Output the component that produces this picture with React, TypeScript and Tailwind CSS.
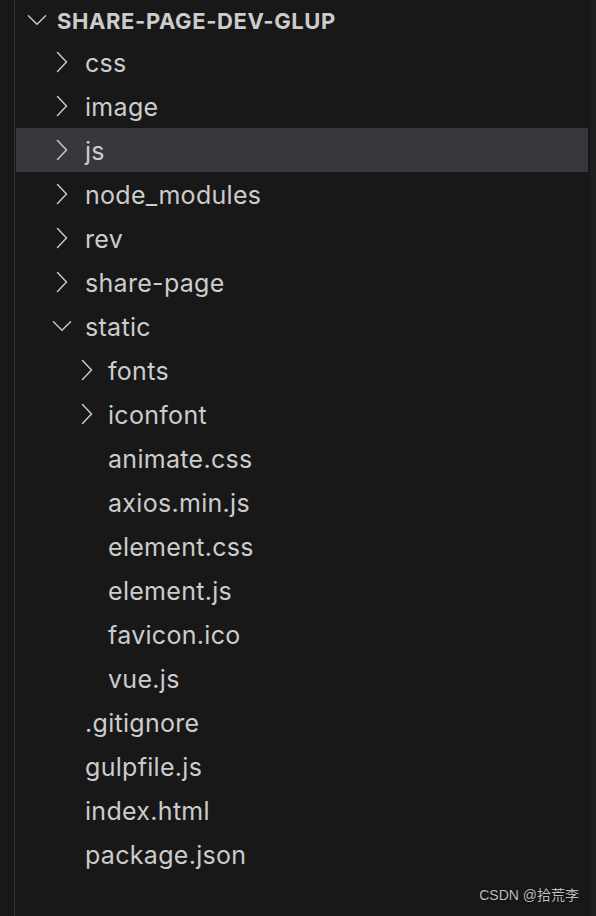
import React from "react";

interface TreeRow {
  name: string;
  depth: 1 | 2;
  kind: "closed" | "open" | "file";
  active?: boolean;
}

const rows: TreeRow[] = [
  { name: "css", depth: 1, kind: "closed" },
  { name: "image", depth: 1, kind: "closed" },
  { name: "js", depth: 1, kind: "closed", active: true },
  { name: "node_modules", depth: 1, kind: "closed" },
  { name: "rev", depth: 1, kind: "closed" },
  { name: "share-page", depth: 1, kind: "closed" },
  { name: "static", depth: 1, kind: "open" },
  { name: "fonts", depth: 2, kind: "closed" },
  { name: "iconfont", depth: 2, kind: "closed" },
  { name: "animate.css", depth: 2, kind: "file" },
  { name: "axios.min.js", depth: 2, kind: "file" },
  { name: "element.css", depth: 2, kind: "file" },
  { name: "element.js", depth: 2, kind: "file" },
  { name: "favicon.ico", depth: 2, kind: "file" },
  { name: "vue.js", depth: 2, kind: "file" },
  { name: ".gitignore", depth: 1, kind: "file" },
  { name: "gulpfile.js", depth: 1, kind: "file" },
  { name: "index.html", depth: 1, kind: "file" },
  { name: "package.json", depth: 1, kind: "file" },
];

function ChevronRight() {
  return (
    <svg width="12" height="22" viewBox="0 0 12 22" fill="none">
      <polyline points="1.5,1.5 10.5,11 1.5,20.5" stroke="#c8c8c8" strokeWidth="1.5" strokeLinecap="round" strokeLinejoin="round" />
    </svg>
  );
}

function ChevronDown() {
  return (
    <svg width="21" height="12" viewBox="0 0 21 12" fill="none">
      <polyline points="1.5,1.5 10.5,10.5 19.5,1.5" stroke="#c8c8c8" strokeWidth="1.5" strokeLinecap="round" strokeLinejoin="round" />
    </svg>
  );
}

export default function App(): JSX.Element {
  return (
    <div
      className="w-[596px] h-[916px] bg-[#181818] flex relative overflow-hidden text-[#cccccc]"
      style={{ fontFamily: "Inter, 'Noto Sans', sans-serif" }}
    >
      {/* left gutter + guide line */}
      <div className="w-[14px] shrink-0" />
      <div className="w-px shrink-0 bg-[#333333]" />
      <div className="w-px shrink-0" />

      {/* tree */}
      <div className="flex-1 flex flex-col">
        <div className="h-[40px] flex items-center pl-[11px]">
          <span className="w-[20px] flex justify-center">
            <ChevronDown />
          </span>
          <span className="ml-[10px] pt-px text-[22px] leading-none font-bold tracking-[0.6px] text-[#cccccc]">
            SHARE-PAGE-DEV-GLUP
          </span>
        </div>

        {rows.map((row) => (
          <div
            key={row.name}
            className={`h-[44px] flex items-center ${row.depth === 1 ? "pl-[36px]" : "pl-[61px]"} ${row.active ? "bg-[#37373d]" : ""}`}
          >
            <span className="w-[20px] h-[22px] flex items-center justify-center">
              {row.kind === "closed" && <ChevronRight />}
              {row.kind === "open" && <ChevronDown />}
            </span>
            <span className={`${row.depth === 1 ? "ml-[13px]" : "ml-[11px]"} pt-[2px] text-[25px] leading-none tracking-[0.3px]`}>
              {row.name}
            </span>
          </div>
        ))}
      </div>

      {/* scrollbar track */}
      <div className="w-[8px] shrink-0 bg-[#1f1f1f] border-l-2 border-[#171717]" />

      {/* watermark */}
      <div
        className="absolute right-[17px] bottom-[10px] text-[14px] text-[#bdbdbd]"
        style={{ fontFamily: "'Liberation Sans', 'Noto Sans CJK SC', sans-serif", textShadow: "0 0 2px #000" }}
      >
        CSDN @拾荒李
      </div>
    </div>
  );
}
